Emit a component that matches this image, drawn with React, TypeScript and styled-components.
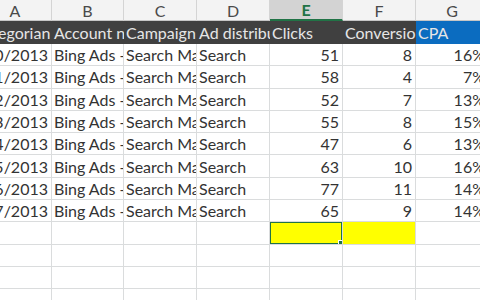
import React from 'react';
import styled, { createGlobalStyle } from 'styled-components';

const GlobalStyle = createGlobalStyle`
  html, body {
    margin: 0;
    padding: 0;
    background: #fff;
    overflow: hidden;
  }
  body {
    font-family: Lato, "Liberation Sans", sans-serif;
  }
`;

const columns = ['A', 'B', 'C', 'D', 'E', 'F', 'G'];
const widths = [73, 72, 73, 73, 73, 73, 73];

const headers = [
  'Gregorian date',
  'Account name',
  'Campaign name',
  'Ad distribution',
  'Clicks',
  'Conversions',
  'CPA',
];

const rows = [
  ['6/10/2013', 51, 8, '16%'],
  ['6/11/2013', 58, 4, '7%'],
  ['6/12/2013', 52, 7, '13%'],
  ['6/13/2013', 55, 8, '15%'],
  ['6/14/2013', 47, 6, '13%'],
  ['6/15/2013', 63, 10, '16%'],
  ['6/16/2013', 77, 11, '14%'],
  ['6/17/2013', 65, 9, '14%'],
];

const App = () => {
  return (
    <>
      <GlobalStyle />
      <Sheet style={{ gridTemplateColumns: widths.map((w) => `${w}px`).join(' ') }}>
        {columns.map((col) => (
          <ColHeader key={col} $active={col === 'E'}>
            {col}
          </ColHeader>
        ))}
        {headers.map((title, i) => (
          <TitleCell key={title} $blue={i === 6}>
            {title}
          </TitleCell>
        ))}
        {rows.map((row) => (
          <React.Fragment key={row[0] as string}>
            <Cell $align="right">{row[0]}</Cell>
            <Cell>Bing Ads - Contoso</Cell>
            <Cell>Search Marketing</Cell>
            <Cell>Search</Cell>
            <Cell $align="right">{row[1]}</Cell>
            <Cell $align="right">{row[2]}</Cell>
            <Cell $align="right">{row[3]}</Cell>
          </React.Fragment>
        ))}
        {columns.map((col) => (
          <Cell key={`y-${col}`} $fill={col === 'E' || col === 'F' ? '#ffff00' : undefined}>
            {col === 'E' && (
              <Selection>
                <Handle />
              </Selection>
            )}
          </Cell>
        ))}
        {[0, 1, 2].map((r) =>
          columns.map((col) => <Cell key={`e-${r}-${col}`} />)
        )}
      </Sheet>
    </>
  );
};

export default App;

const Sheet = styled.div`
  display: grid;
  grid-template-rows: 21px 23px;
  grid-auto-rows: 22.3px;
  margin-left: -21px;
  width: 510px;
  height: 300px;
  overflow: hidden;
`;

const ColHeader = styled.div<{ $active?: boolean }>`
  display: flex;
  align-items: center;
  justify-content: center;
  box-sizing: border-box;
  font-size: 16px;
  color: ${(p) => (p.$active ? '#217346' : '#4a4a4a')};
  font-weight: ${(p) => (p.$active ? 700 : 400)};
  background: ${(p) => (p.$active ? '#d3d3d3' : '#f3f3f3')};
  border-right: 1px solid #d4d4d4;
  border-bottom: ${(p) => (p.$active ? '2px solid #217346' : '1px solid #c6c6c6')};
`;

const TitleCell = styled.div<{ $blue?: boolean }>`
  display: flex;
  align-items: center;
  box-sizing: border-box;
  padding-left: 2px;
  overflow: hidden;
  white-space: nowrap;
  font-size: 16px;
  color: #e6e6e6;
  background: ${(p) => (p.$blue ? '#0b6cc0' : '#404040')};
`;

const Cell = styled.div<{ $align?: 'left' | 'right'; $fill?: string }>`
  position: relative;
  display: flex;
  align-items: center;
  justify-content: ${(p) => (p.$align === 'right' ? 'flex-end' : 'flex-start')};
  box-sizing: border-box;
  padding: 0 3px 0 2px;
  overflow: hidden;
  white-space: nowrap;
  font-size: 16px;
  color: #333;
  background: ${(p) => p.$fill ?? '#fff'};
  border-right: 1px solid #dadcdd;
  border-bottom: 1px solid #dadcdd;
`;

const Selection = styled.div`
  position: absolute;
  inset: -1px;
  border: 2px solid #217346;
  box-sizing: border-box;
`;

const Handle = styled.div`
  position: absolute;
  right: -4px;
  bottom: -4px;
  width: 5px;
  height: 5px;
  background: #217346;
  border: 1px solid #fff;
`;
